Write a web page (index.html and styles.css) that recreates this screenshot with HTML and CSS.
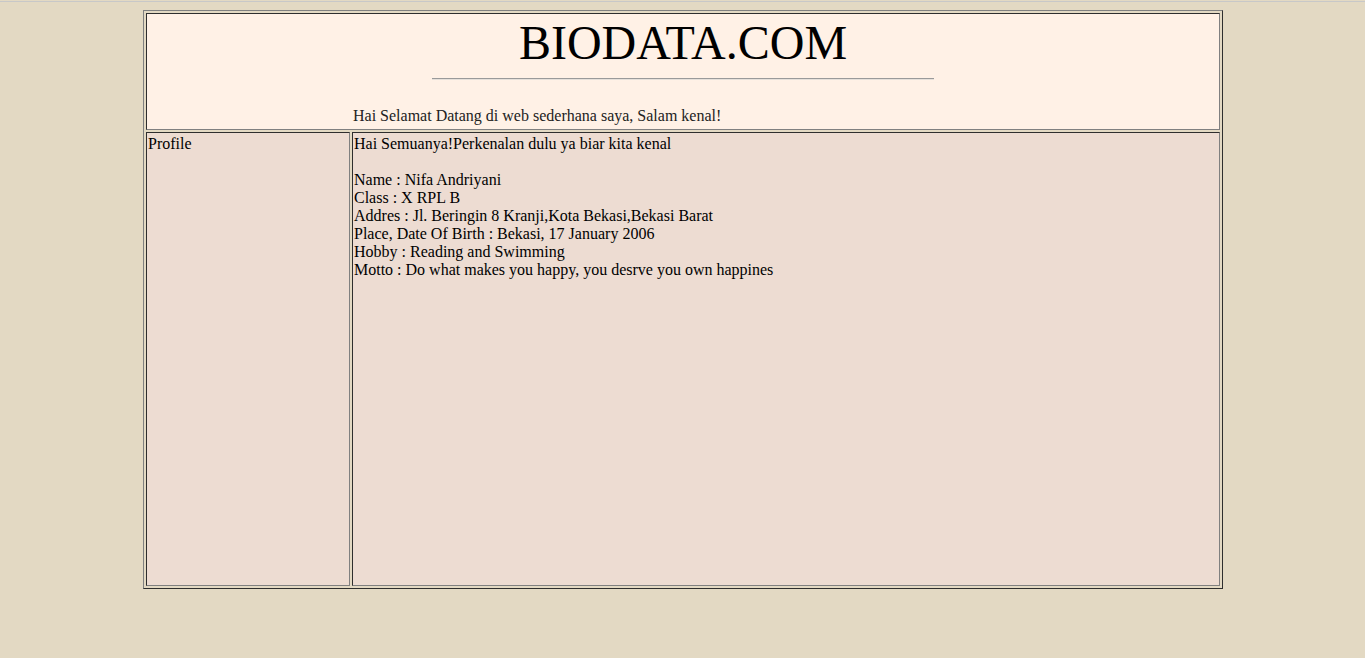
FILE: index.html
```html
<!DOCTYPE html>
<html>
<head>
<meta charset="utf-8">
<title>BIODATA.COM</title>
<link rel="stylesheet" href="styles.css">
</head>
<body>
<div class="topline"></div>
<div class="frame">
  <div class="cell header">
    <div class="title">BIODATA.COM</div>
    <hr class="rule">
    <div class="welcome">Hai Selamat Datang di web sederhana saya, Salam kenal!</div>
  </div>
  <div class="cell side">Profile</div>
  <div class="cell main">
    <p>Hai Semuanya!Perkenalan dulu ya biar kita kenal</p>
    <p>Name : Nifa Andriyani<br>
    Class : X RPL B<br>
    Addres : Jl. Beringin 8 Kranji,Kota Bekasi,Bekasi Barat<br>
    Place, Date Of Birth : Bekasi, 17 January 2006<br>
    Hobby : Reading and Swimming<br>
    Motto : Do what makes you happy, you desrve you own happines</p>
  </div>
</div>
</body>
</html>
```

FILE: styles.css
```css
html {
  background: #e3d9c3;
}
body {
  margin: 0;
  font-family: "Liberation Serif", "Times New Roman", serif;
  font-size: 16px;
  line-height: 18px;
  color: #000;
}
.topline {
  margin-top: 1px;
  height: 1px;
  background: #c8c8c8;
}
.frame {
  width: 1080px;
  box-sizing: border-box;
  margin: 8px 0 0 143px;
  border: 1px solid;
  border-color: #808080 #2e2e2e #2e2e2e #808080;
  padding: 2px;
  display: grid;
  grid-template-columns: 204px 868px;
  grid-template-rows: 117px 454px;
  gap: 2px;
}
.cell {
  box-sizing: border-box;
  border: 1px solid;
  border-color: #2e2e2e #808080 #808080 #2e2e2e;
  padding: 1px;
}
.header {
  grid-column: 1 / 3;
  background: #fff1e6;
  display: flex;
  flex-direction: column;
  align-items: stretch;
}
.title {
  font-size: 48px;
  line-height: 55px;
  text-align: center;
}
.rule {
  width: 502px;
  margin: 8px auto 0;
  border: 0;
  border-top: 1px solid #9a9a9a;
  border-bottom: 1px solid #e6e0da;
  height: 0;
}
.welcome {
  margin-top: 27px;
  padding-left: 205px;
  color: #222;
}
.side,
.main {
  background: #eddcd2;
  padding-top: 2px;
}
.main p {
  margin: 0 0 18px;
}
```
